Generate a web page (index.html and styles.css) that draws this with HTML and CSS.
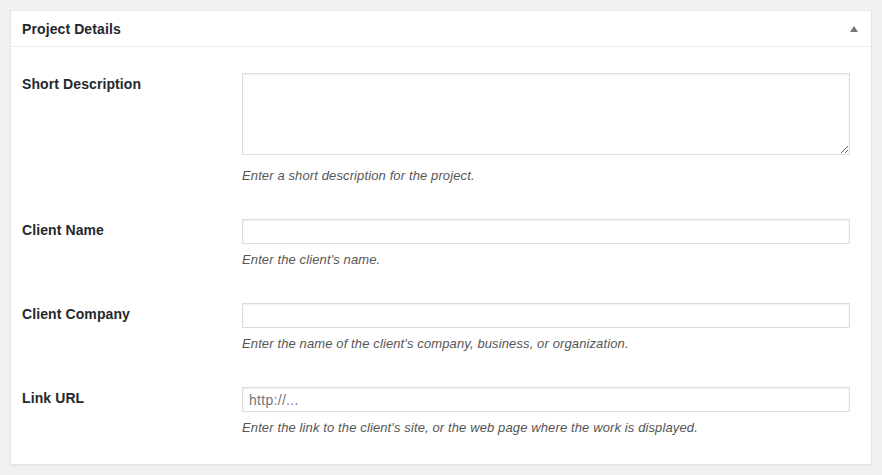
FILE: index.html
```html
<!DOCTYPE html>
<html lang="en">
<head>
<meta charset="utf-8">
<title>Project Details</title>
<link rel="stylesheet" href="styles.css">
</head>
<body>
<div class="postbox">
  <div class="postbox-header">
    <h2 class="hndle">Project Details</h2>
    <span class="toggle-arrow" aria-hidden="true"></span>
  </div>
  <div class="inside">
    <div class="row">
      <label class="field-label" for="short-desc">Short Description</label>
      <div class="field">
        <textarea id="short-desc" class="field-textarea"></textarea>
        <p class="description description-after-textarea">Enter a short description for the project.</p>
      </div>
    </div>
    <div class="row">
      <label class="field-label" for="client-name">Client Name</label>
      <div class="field">
        <input id="client-name" class="field-input" type="text">
        <p class="description">Enter the client's name.</p>
      </div>
    </div>
    <div class="row">
      <label class="field-label" for="client-company">Client Company</label>
      <div class="field">
        <input id="client-company" class="field-input" type="text">
        <p class="description">Enter the name of the client's company, business, or organization.</p>
      </div>
    </div>
    <div class="row">
      <label class="field-label" for="link-url">Link URL</label>
      <div class="field">
        <input id="link-url" class="field-input" type="text" placeholder="http://...">
        <p class="description">Enter the link to the client's site, or the web page where the work is displayed.</p>
      </div>
    </div>
  </div>
</div>
</body>
</html>
```

FILE: styles.css
```css
html, body {
  margin: 0;
  padding: 0;
}

body {
  background: #f1f1f1;
  padding: 10px;
  font-family: "Liberation Sans", Arial, sans-serif;
  color: #23282d;
  font-size: 14px;
}

.postbox {
  background: #fff;
  border: 1px solid #e5e5e5;
  box-shadow: 0 1px 1px rgba(0, 0, 0, 0.04);
}

.postbox-header {
  display: flex;
  align-items: center;
  justify-content: space-between;
  height: 35px;
  border-bottom: 1px solid #eee;
  padding: 0 13px 0 11px;
}

.hndle {
  margin: 0;
  font-size: 14px;
  font-weight: 700;
  line-height: 18px;
  letter-spacing: 0.1px;
  color: #23282d;
}

.toggle-arrow {
  width: 0;
  height: 0;
  border-left: 4px solid transparent;
  border-right: 4px solid transparent;
  border-bottom: 6px solid #72777c;
  margin-top: 1px;
}

.inside {
  padding: 11px 21px 8px 11px;
}

.row {
  display: grid;
  grid-template-columns: 220px 1fr;
  padding: 15px 0 15px 0;
}

.field-label {
  font-weight: 700;
  font-size: 14px;
  line-height: 18px;
  letter-spacing: 0.1px;
  padding-top: 2px;
  color: #23282d;
}

.field {
  display: flex;
  flex-direction: column;
}

.field-textarea,
.field-input {
  display: block;
  box-sizing: border-box;
  width: 100%;
  margin: 0;
  border: 1px solid #ddd;
  border-radius: 0;
  box-shadow: inset 0 1px 2px rgba(0, 0, 0, 0.07);
  background: #fff;
  font-family: "Liberation Sans", Arial, sans-serif;
  font-size: 14px;
  color: #32373c;
  outline: none;
}

.field-textarea {
  height: 82px;
  padding: 2px 6px;
  resize: vertical;
}

.field-input {
  height: 25px;
  padding: 2px 6px;
  letter-spacing: 0.3px;
}

.field-input::placeholder {
  color: #72777c;
  opacity: 1;
}

.description {
  margin: 6px 0 4px 0;
  font-size: 13px;
  line-height: 19px;
  letter-spacing: 0.12px;
  font-style: italic;
  color: #555;
}

.description-after-textarea {
  margin-top: 11px;
}
```
